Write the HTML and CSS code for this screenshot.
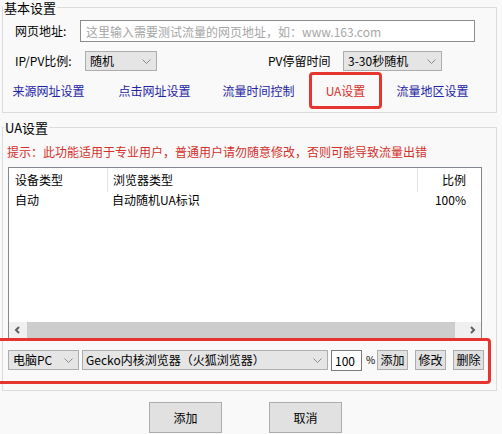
FILE: index.html
```html
<!DOCTYPE html>
<html lang="zh-CN">
<head>
<meta charset="utf-8">
<title>流量设置</title>
<link rel="stylesheet" href="styles.css">
</head>
<body>
  <fieldset class="group group-basic">
    <legend>基本设置</legend>

    <div class="row row-url">
      <label class="lbl lbl-url" for="url">网页地址:</label>
      <input id="url" class="url" type="text" placeholder="这里输入需要测试流量的网页地址，如：www.163.com">
    </div>

    <div class="row row-ratio">
      <span class="lbl lbl-ratio">IP/PV比例:</span>
      <div class="combo combo-ratio"><span>随机</span><svg class="chev" width="9" height="5" viewBox="0 0 9 5"><polyline points="0.5,0.5 4.5,4.5 8.5,0.5"/></svg></div>
      <span class="lbl lbl-stay">PV停留时间</span>
      <div class="combo combo-stay"><span>3-30秒随机</span><svg class="chev" width="9" height="5" viewBox="0 0 9 5"><polyline points="0.5,0.5 4.5,4.5 8.5,0.5"/></svg></div>
    </div>

    <nav class="tabs">
      <a class="tab tab-source" href="#">来源网址设置</a>
      <a class="tab tab-click" href="#">点击网址设置</a>
      <a class="tab tab-time" href="#">流量时间控制</a>
      <a class="tab tab-active" href="#">UA设置</a>
      <a class="tab" href="#">流量地区设置</a>
    </nav>
  </fieldset>

  <fieldset class="group group-ua">
    <legend>UA设置</legend>

    <p class="hint">提示：此功能适用于专业用户，普通用户请勿随意修改，否则可能导致流量出错</p>

    <div class="list">
      <div class="list-row list-head">
        <div class="cell c-device">设备类型</div>
        <div class="cell c-browser">浏览器类型</div>
        <div class="cell c-ratio">比例</div>
      </div>
      <div class="list-row list-item">
        <div class="cell c-device">自动</div>
        <div class="cell c-browser">自动随机UA标识</div>
        <div class="cell c-ratio">100%</div>
      </div>
      <div class="list-fill"></div>
      <div class="hscroll">
        <div class="sb-btn"><svg width="7" height="8" viewBox="0 0 7 8"><polyline points="5,1 2,4 5,7"/></svg></div>
        <div class="sb-thumb"></div>
        <div class="sb-track"></div>
        <div class="sb-btn"><svg width="7" height="8" viewBox="0 0 7 8"><polyline points="2,1 5,4 2,7"/></svg></div>
      </div>
    </div>

    <div class="toolbar">
      <div class="combo combo-device"><span>电脑PC</span><svg class="chev" width="9" height="5" viewBox="0 0 9 5"><polyline points="0.5,0.5 4.5,4.5 8.5,0.5"/></svg></div>
      <div class="combo combo-browser"><span>Gecko内核浏览器（火狐浏览器）</span><svg class="chev" width="9" height="5" viewBox="0 0 9 5"><polyline points="0.5,0.5 4.5,4.5 8.5,0.5"/></svg></div>
      <input class="ratio" type="text" value="100">
      <span class="pct">%</span>
      <button class="btn btn-sm" type="button">添加</button>
      <button class="btn btn-sm" type="button">修改</button>
      <button class="btn btn-sm" type="button">删除</button>
    </div>
  </fieldset>

  <div class="actions">
    <button class="btn btn-lg" type="button">添加</button>
    <button class="btn btn-lg" type="button">取消</button>
  </div>
</body>
</html>
```

FILE: styles.css
```css
* {
  box-sizing: border-box;
}

html,
body {
  margin: 0;
}

body {
  width: 502px;
  height: 434px;
  overflow: hidden;
  background: #f9f9f9;
  color: #000;
  font-family: "Noto Sans CJK SC", "Liberation Sans", sans-serif;
  font-size: 12px;
  line-height: 14px;
}

/* group boxes */
.group {
  margin: 0 5px 0 2px;
  padding: 0 0 3px;
  border: 1px solid #dcdcdc;
  min-width: 0;
}

.group legend {
  margin-left: 0;
  padding: 1px 1px 0;
  font-size: 13px;
  line-height: 13px;
}

.group-ua {
  margin-top: 7px;
  padding-bottom: 6px;
}

.group-ua legend {
  margin-left: 1px;
}

/* form rows */
.row {
  display: flex;
  align-items: center;
  padding-left: 12px;
}

.row-url {
  height: 22px;
  margin-top: 6px;
}

.lbl {
  flex: none;
  white-space: nowrap;
}

.lbl-url {
  width: 65px;
}

.url {
  width: 395px;
  height: 22px;
  margin: 0;
  padding: 0 5px;
  border: 1px solid #8c8c8c;
  background: #fff;
  font: inherit;
  outline: none;
}

.url::placeholder {
  color: #a6a6a6;
}

.row-ratio {
  height: 20px;
  margin-top: 9px;
}

.lbl-ratio {
  width: 70px;
}

.lbl-stay {
  width: 75px;
  margin-left: 111px;
}

/* drop-down lists */
.combo {
  flex: none;
  display: flex;
  align-items: center;
  justify-content: space-between;
  height: 20px;
  padding: 0 5px 0 4px;
  border: 1px solid #adadad;
  background: #e5e5e5;
  white-space: nowrap;
}

.chev {
  flex: none;
  fill: none;
  stroke: #8a8a8a;
  stroke-width: 1;
}

.combo-ratio {
  width: 72px;
}

.combo-stay {
  width: 99px;
}

/* tab links */
.tabs {
  display: flex;
  gap: 14px;
  height: 37px;
  margin-top: 1px;
  padding-left: 9px;
}

.tab {
  flex: none;
  display: flex;
  align-items: center;
  justify-content: center;
  width: 73px;
  height: 37px;
  border: 3px solid transparent;
  border-radius: 4px;
  color: #2323a6;
  text-decoration: none;
  white-space: nowrap;
}

.tab-source {
  margin-right: 19px;
}

.tab-click {
  margin-right: 17px;
}

.tab-active {
  border-color: #e5352f;
  color: #d3302a;
}

/* UA list */
.hint {
  margin: 11px 0 0 4px;
  color: #d3302a;
  white-space: nowrap;
}

.list {
  display: flex;
  flex-direction: column;
  width: 474px;
  height: 172px;
  margin: 8px 0 0 5px;
  border: 1px solid #828790;
  background: #fff;
}

.list-row {
  display: grid;
  grid-template-columns: 98px 310px 1fr;
}

.list-head {
  height: 24px;
}

.list-item {
  height: 16px;
}

.cell {
  display: flex;
  align-items: center;
  white-space: nowrap;
}

.c-device {
  padding-left: 6px;
}

.c-browser {
  padding-left: 5px;
}

.c-ratio {
  justify-content: flex-end;
  padding-right: 15px;
}

.list-head .c-browser,
.list-head .c-ratio {
  border-left: 1px solid #e5e5e5;
}

.list-fill {
  flex: 1;
}

.hscroll {
  display: flex;
  height: 16px;
  background: #f0f0f0;
}

.sb-btn {
  flex: none;
  display: flex;
  align-items: center;
  justify-content: center;
  width: 17px;
}

.sb-btn svg {
  fill: none;
  stroke: #606060;
  stroke-width: 2;
}

.sb-thumb {
  flex: none;
  width: 428px;
  margin-left: 1px;
  background: #cdcdcd;
}

.sb-track {
  flex: 1;
}

/* edit bar under the list */
.toolbar {
  display: flex;
  align-items: flex-start;
  height: 46px;
  margin: -1px 5px 0 -7px;
  padding: 9px 0 0 9px;
  border: 3px solid #e5352f;
  border-radius: 4px;
}

.combo-device {
  width: 71px;
}

.combo-browser {
  width: 246px;
  margin-left: 3px;
  padding-left: 3px;
}

.ratio {
  flex: none;
  width: 31px;
  height: 21px;
  margin: 0 0 0 3px;
  padding: 0 3px;
  border: 1px solid #7a7a7a;
  background: #fff;
  font: inherit;
  outline: none;
}

.pct {
  flex: none;
  width: 7px;
  margin-left: 4px;
  line-height: 20px;
  font-size: 10px;
}

.btn {
  margin: 0;
  padding: 0;
  border: 1px solid #adadad;
  background: #e1e1e1;
  color: #000;
  font: inherit;
}

.btn-sm {
  flex: none;
  width: 31px;
  height: 20px;
  margin-left: 7px;
}

.pct + .btn-sm {
  margin-left: 4px;
}

/* dialog buttons */
.actions {
  display: flex;
  gap: 47px;
  margin-top: 11px;
  padding-left: 149px;
}

.btn-lg {
  width: 73px;
  height: 31px;
}
```
